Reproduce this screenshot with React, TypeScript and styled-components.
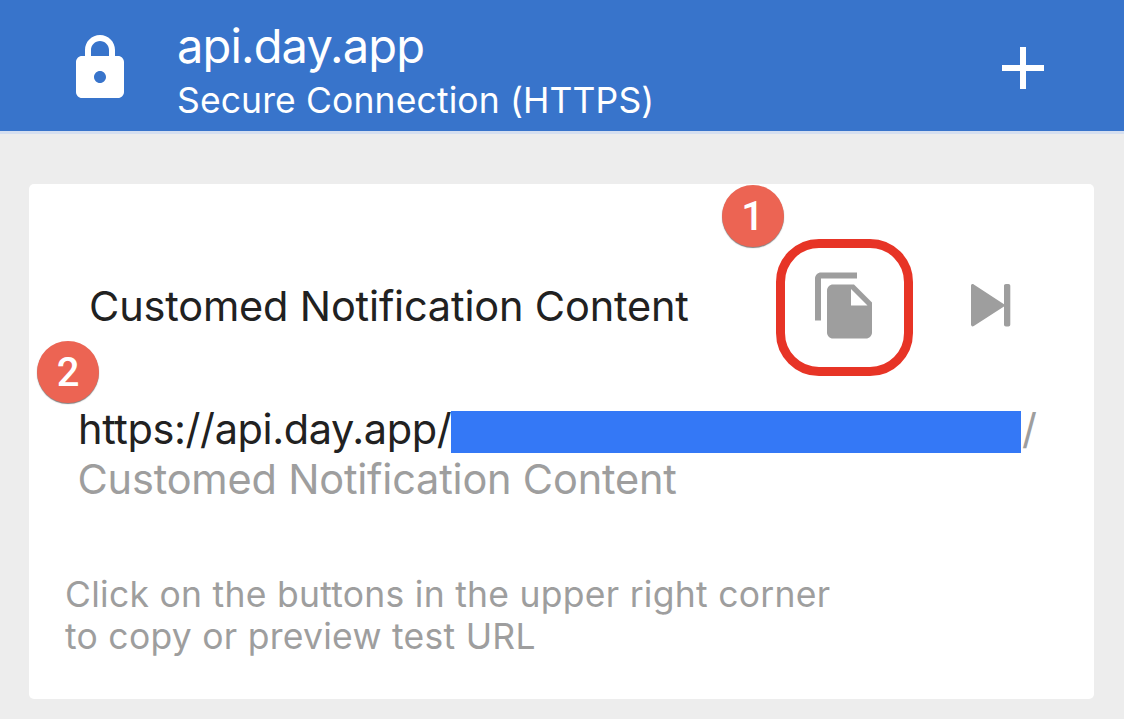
// Server card with the copy / preview buttons and the two step markers.
import React from "react";
import styled, { createGlobalStyle } from "styled-components";

const GlobalStyle = createGlobalStyle`
  body {
    margin: 0;
    background-color: #ededed;
    font-family: Inter, "Liberation Sans", sans-serif;
  }
`;

interface StepProps {
  left: number;
  top: number;
}

const LockIcon: React.FC = () => (
  <Icon viewBox="0 0 24 24">
    <path d="M18 8h-1V6c0-2.76-2.24-5-5-5S7 3.24 7 6v2H6c-1.1 0-2 .9-2 2v10c0 1.1.9 2 2 2h12c1.1 0 2-.9 2-2V10c0-1.1-.9-2-2-2zm-6 9c-1.1 0-2-.9-2-2s.9-2 2-2 2 .9 2 2-.9 2-2 2zm3-9H9V6c0-1.66 1.34-3 3-3s3 1.34 3 3v2z" />
  </Icon>
);

const PlusIcon: React.FC = () => (
  <Icon viewBox="0 0 24 24">
    <path d="M19 13h-6v6h-2v-6H5v-2h6V5h2v6h6v2z" />
  </Icon>
);

const CopyIcon: React.FC = () => (
  <Icon viewBox="0 -0.13 24 24">
    <path d="M16 1H4c-1.1 0-2 .9-2 2v14h2V3h12V1zm-1 4l6 6v10c0 1.1-.9 2-2 2H7.99C6.89 23 6 22.1 6 21l.01-14c0-1.1.89-2 1.99-2h7zm-1 7h5.5L14 6.5V12z" />
  </Icon>
);

const PreviewIcon: React.FC = () => (
  <Icon viewBox="0 -0.7 72 72">
    <path d="M18 16.2c0-1.7 1.5-2.3 2.8-1.4L51 34.6V16.2c0-1.2.8-1.9 1.9-1.9h2.5c1.1 0 1.9.7 1.9 1.9v38.6c0 1.2-.8 1.9-1.9 1.9h-2.5c-1.1 0-1.9-.7-1.9-1.9V36.8L20.8 56.3c-1.3.9-2.8.2-2.8-1.4z" />
  </Icon>
);

const App: React.FC = () => {
  return (
    <Page>
      <GlobalStyle />
      <Header>
        <LockIcon />
        <HeaderText>
          <ServerName>api.day.app</ServerName>
          <ServerStatus>Secure Connection (HTTPS)</ServerStatus>
        </HeaderText>
        <PlusIcon />
      </Header>
      <Card>
        <CardHeader>
          <CardTitle>Customed Notification Content</CardTitle>
          <IconButton aria-label="Copy">
            <CopyIcon />
            <Highlight />
          </IconButton>
          <IconButton aria-label="Preview">
            <PreviewIcon />
          </IconButton>
        </CardHeader>
        <UrlRow>
          <UrlHost>https://api.day.app/</UrlHost>
          <HiddenKey />
          <UrlSlash>/</UrlSlash>
        </UrlRow>
        <UrlContent>Customed Notification Content</UrlContent>
        <Hint>
          Click on the buttons in the upper right corner
          <br />
          to copy or preview test URL
        </Hint>
        <Step left={692.5} top={0.5}>1</Step>
        <Step left={8} top={156.5}>2</Step>
      </Card>
    </Page>
  );
};

// ********** Styles ********************//
const Page = styled.div`
  display: flex;
  flex-direction: column;
  height: 719px;
  overflow: hidden;
  background-color: #ededed;
`;

const Icon = styled.svg`
  display: block;
  flex: none;
  width: 72px;
  height: 72px;
  fill: currentColor;
`;

const Header = styled.header`
  box-sizing: border-box;
  display: flex;
  align-items: flex-start;
  height: 134px;
  padding: 32px 65px 0 64px;
  color: #ffffff;
  background-color: #3874cb;
  border-bottom: 3px solid #d5dff0;
`;

const HeaderText = styled.div`
  flex: 1;
  margin: -11px 0 0 41px;
  white-space: nowrap;
`;

const ServerName = styled.div`
  font-size: 47px;
  line-height: 50px;
  letter-spacing: -0.85px;
`;

const ServerStatus = styled.div`
  margin-top: 6px;
  font-size: 35.5px;
  line-height: 48px;
  letter-spacing: 0.12px;
`;

const Card = styled.section`
  position: relative;
  box-sizing: border-box;
  height: 515px;
  margin: 50px 30px 0 29px;
  border-radius: 5px;
  background-color: #ffffff;
`;

const CardHeader = styled.div`
  display: flex;
  align-items: center;
  padding: 85px 69px 0 60px;
`;

const CardTitle = styled.h1`
  flex: 1;
  margin: 0;
  padding-top: 2px;
  color: #212121;
  font-size: 41.5px;
  font-weight: 400;
  line-height: 50px;
  letter-spacing: -0.18px;
  white-space: nowrap;
`;

const IconButton = styled.button`
  position: relative;
  padding: 0;
  border: 0;
  color: #9e9e9e;
  background: none;

  & + & {
    margin-left: 72px;
  }
`;

const Highlight = styled.span`
  position: absolute;
  top: -30px;
  left: -33px;
  box-sizing: border-box;
  width: 137px;
  height: 137px;
  border: 9px solid #e73426;
  border-radius: 43px;
`;

const UrlRow = styled.div`
  display: flex;
  align-items: flex-start;
  height: 50px;
  margin-top: 63px;
  padding-left: 49px;
  font-size: 41.5px;
  line-height: 50px;
  white-space: nowrap;
`;

const UrlHost = styled.span`
  width: 373px;
  color: #212121;
  letter-spacing: -0.4px;
`;

const HiddenKey = styled.span`
  width: 570px;
  height: 42px;
  margin-top: 7px;
  background-color: #3478f6;
`;

const UrlSlash = styled.span`
  margin-left: 1px;
  color: #9e9e9e;
`;

const UrlContent = styled.div`
  padding-left: 48.5px;
  color: #9e9e9e;
  font-size: 41.5px;
  line-height: 50px;
  letter-spacing: -0.2px;
`;

const Hint = styled.p`
  margin: 70px 0 0 36px;
  color: #9e9e9e;
  font-size: 35.5px;
  line-height: 42px;
  letter-spacing: 0.27px;
`;

const Step = styled.span<StepProps>`
  position: absolute;
  top: ${(props) => props.top}px;
  left: ${(props) => props.left}px;
  width: 62px;
  height: 62px;
  border-radius: 50%;
  color: #ffffff;
  background-color: #ec6453;
  box-shadow: 0 1px 1px rgba(0, 0, 0, 0.5);
  font-family: Roboto, "Liberation Sans", sans-serif;
  font-size: 40px;
  font-weight: 500;
  line-height: 64px;
  text-align: center;
`;

export default App;
